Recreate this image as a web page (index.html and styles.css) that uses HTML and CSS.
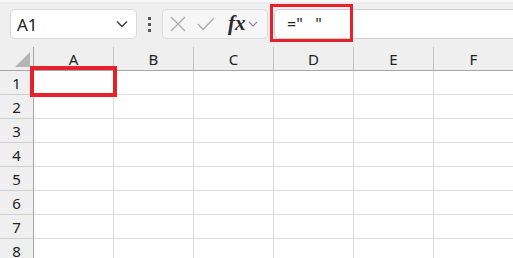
FILE: index.html
```html
<!DOCTYPE html>
<html lang="en">
<head>
  <meta charset="UTF-8">
  <title>Sheet</title>
  <link rel="stylesheet" href="styles.css">
</head>
<body>
<header class="toolbar">
  <div class="namebox">
    <span>A1</span>
    <svg class="chev" viewBox="0 0 12 8"><polyline points="1,1.5 6,6.5 11,1.5" /></svg>
  </div>
  <div class="grip"><i></i><i></i><i></i></div>
  <div class="fxgroup">
    <svg class="cancel" viewBox="0 0 16 16"><path d="M1 1 L15 15 M15 1 L1 15" /></svg>
    <svg class="enter" viewBox="0 0 18 14"><polyline points="1,7 6,12.5 17,1" /></svg>
    <span class="fx">fx</span>
    <svg class="chev small" viewBox="0 0 10 6"><polyline points="1,1 5,5 9,1" /></svg>
  </div>
  <div class="formula">
    <span>="&nbsp;&nbsp;&nbsp;"</span>
    <div class="mark mark-formula"></div>
  </div>
</header>

<main class="sheet">
  <div class="corner"></div>
  <div class="colhead">A</div>
  <div class="colhead">B</div>
  <div class="colhead">C</div>
  <div class="colhead">D</div>
  <div class="colhead">E</div>
  <div class="colhead">F</div>

  <div class="rowhead">1</div><div class="cell"></div><div class="cell"></div><div class="cell"></div><div class="cell"></div><div class="cell"></div><div class="cell"></div>
  <div class="rowhead">2</div><div class="cell"></div><div class="cell"></div><div class="cell"></div><div class="cell"></div><div class="cell"></div><div class="cell"></div>
  <div class="rowhead">3</div><div class="cell"></div><div class="cell"></div><div class="cell"></div><div class="cell"></div><div class="cell"></div><div class="cell"></div>
  <div class="rowhead">4</div><div class="cell"></div><div class="cell"></div><div class="cell"></div><div class="cell"></div><div class="cell"></div><div class="cell"></div>
  <div class="rowhead">5</div><div class="cell"></div><div class="cell"></div><div class="cell"></div><div class="cell"></div><div class="cell"></div><div class="cell"></div>
  <div class="rowhead">6</div><div class="cell"></div><div class="cell"></div><div class="cell"></div><div class="cell"></div><div class="cell"></div><div class="cell"></div>
  <div class="rowhead">7</div><div class="cell"></div><div class="cell"></div><div class="cell"></div><div class="cell"></div><div class="cell"></div><div class="cell"></div>
  <div class="rowhead">8</div><div class="cell"></div><div class="cell"></div><div class="cell"></div><div class="cell"></div><div class="cell"></div><div class="cell"></div>

  <div class="mark mark-cell"></div>
</main>
</body>
</html>
```

FILE: styles.css
```css
*, *::before, *::after {
  box-sizing: border-box;
  margin: 0;
  padding: 0;
}

body {
  width: 513px;
  height: 258px;
  overflow: hidden;
  background: #efefef;
  font-family: "Segoe UI", "Noto Sans", "Liberation Sans", sans-serif;
  color: #222;
}

.toolbar {
  height: 47px;
  display: flex;
  align-items: flex-start;
  padding-top: 9px;
  background: linear-gradient(#fbfbfb 0, #f4f4f4 2px, #e4e4e4 3px, #efefef 4px);
}

.namebox {
  margin-left: 10px;
  width: 127px;
  height: 30px;
  display: flex;
  align-items: center;
  justify-content: space-between;
  padding: 0 8px 0 6px;
  background: #fff;
  border: 1px solid #d9d9d9;
  border-radius: 5px;
  font-size: 17px;
}

.chev {
  width: 12px;
  height: 8px;
  fill: none;
  stroke: #3a3a3a;
  stroke-width: 1.4;
}
.chev.small {
  width: 10px;
  height: 6px;
  stroke: #8a8a8a;
  stroke-width: 1.1;
}

.grip {
  width: 25px;
  height: 30px;
  display: flex;
  flex-direction: column;
  align-items: center;
  justify-content: center;
  gap: 3px;
}
.grip i {
  width: 3px;
  height: 3px;
  background: #555;
}

.fxgroup {
  width: 106px;
  height: 30px;
  display: flex;
  align-items: center;
  padding-left: 7px;
  background: #f6f6f6;
  border: 1px solid #dcdcdc;
  border-radius: 5px;
}
.cancel {
  width: 16px;
  height: 16px;
  stroke: #ababab;
  stroke-width: 1.2;
  fill: none;
}
.enter {
  width: 18px;
  height: 14px;
  margin-left: 11px;
  stroke: #ababab;
  stroke-width: 1.2;
  fill: none;
}
.fx {
  margin-left: 13px;
  margin-right: 2px;
  font-family: "Liberation Serif", "DejaVu Serif", serif;
  font-style: italic;
  font-weight: bold;
  font-size: 21px;
  line-height: 1;
  color: #2a2a2a;
  position: relative;
  top: -1px;
}

.formula {
  position: relative;
  margin-left: 6px;
  flex: 1;
  height: 30px;
  display: flex;
  align-items: center;
  padding-left: 12px;
  background: #fff;
  border: 1px solid #cfcfcf;
  border-right: none;
  border-radius: 5px 0 0 5px;
  font-size: 16px;
  white-space: pre;
}

.mark {
  position: absolute;
  border: 3px solid #e8202a;
  pointer-events: none;
}
.mark-formula {
  left: -5px;
  top: -6px;
  width: 83px;
  height: 38px;
}

.sheet {
  position: relative;
  display: grid;
  grid-template-columns: 34px repeat(6, 80px);
  grid-template-rows: 24px;
  grid-auto-rows: 24px;
}

.corner,
.colhead,
.rowhead {
  background: #efefef;
}
.corner {
  position: relative;
  border-right: 1px solid #a6a6a6;
  border-bottom: 1px solid #a6a6a6;
}
.corner::after {
  content: "";
  position: absolute;
  right: 3px;
  bottom: 3px;
  width: 0;
  height: 0;
  border-left: 15px solid transparent;
  border-bottom: 15px solid #b5b5b5;
}
.colhead {
  display: flex;
  align-items: center;
  justify-content: center;
  font-size: 15px;
  padding-top: 1px;
  border-right: 1px solid #c2c2c2;
  border-bottom: 1px solid #a6a6a6;
}
.rowhead {
  display: flex;
  align-items: center;
  justify-content: center;
  font-size: 15px;
  border-right: 1px solid #a6a6a6;
  border-bottom: 1px solid #cfcfcf;
}
.cell {
  background: #fff;
  border-right: 1px solid #dcdcdc;
  border-bottom: 1px solid #dcdcdc;
}

.mark-cell {
  border-width: 4px;
  left: 30px;
  top: 19px;
  width: 87px;
  height: 31px;
}
```
